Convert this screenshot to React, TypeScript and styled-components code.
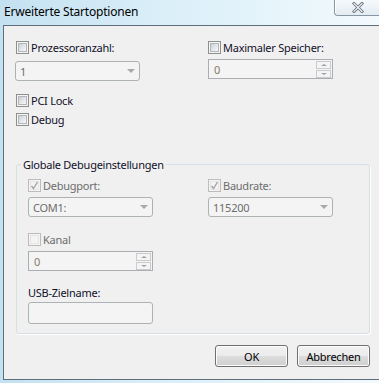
import React from "react";
import styled, { createGlobalStyle, css } from "styled-components";

const GlobalStyle = createGlobalStyle`
  html, body {
    margin: 0;
    padding: 0;
    width: 379px;
    height: 383px;
    overflow: hidden;
  }
  body {
    font-family: "Noto Sans", "Open Sans", sans-serif;
    font-size: 11px;
    letter-spacing: -0.25px;
    color: #000;
  }
`;

const Window = styled.div`
  display: flex;
  flex-direction: column;
  width: 384px;
  height: 383px;
  background: linear-gradient(90deg, #c4e1f1 0%, #d9eef8 40%, #e8f5fb 75%, #f3fafd 100%);
`;

const TitleBar = styled.div`
  display: flex;
  justify-content: space-between;
  align-items: flex-start;
  height: 25px;
  flex: none;
`;

const Title = styled.div`
  padding: 4px 0 0 4px;
  line-height: 15px;
  font-size: 12px;
  letter-spacing: -0.2px;
  color: #000;
`;

const CloseButton = styled.div`
  display: flex;
  align-items: center;
  justify-content: center;
  width: 46px;
  height: 15px;
  margin-right: 3px;
  border: 1px solid #8796a4;
  border-top: none;
  border-right: none;
  border-bottom-left-radius: 4px;
  background: linear-gradient(#f6f9fb, #e3ecf2);
  box-shadow: inset 1px 0 0 #ffffff;
`;

const Client = styled.div`
  flex: 1;
  margin: 0 0 3px 3px;
  border: 1px solid #5f6e7b;
  border-right: none;
  background: #f0f0f0;
  padding: 14px 0 0 11px;
`;

const Columns = styled.div<{ $left: number }>`
  display: grid;
  grid-template-columns: ${(p) => p.$left}px 125px;
  align-items: start;
`;

const Column = styled.div`
  display: flex;
  flex-direction: column;
  align-items: flex-start;
`;

const CheckRow = styled.label<{ $mt?: number; $ml?: number; $disabled?: boolean }>`
  display: flex;
  align-items: center;
  gap: 2px;
  height: 15px;
  line-height: 15px;
  margin-top: ${(p) => p.$mt ?? 0}px;
  margin-left: ${(p) => p.$ml ?? 0}px;
  color: ${(p) => (p.$disabled ? "#6d6d6d" : "#10102a")};
  white-space: nowrap;
`;

const Box = styled.span<{ $disabled?: boolean }>`
  position: relative;
  display: inline-block;
  box-sizing: border-box;
  width: 13px;
  height: 13px;
  border: 1px solid ${(p) => (p.$disabled ? "#bcbcbc" : "#8e8f8f")};
  background: #f4f4f4;
  padding: 1px;
  flex: none;
  &::after {
    content: "";
    display: block;
    box-sizing: border-box;
    width: 9px;
    height: 9px;
    ${(p) =>
      p.$disabled
        ? css`
            background: #f4f4f4;
            border: 1px solid #e6e6e6;
          `
        : css`
            background: linear-gradient(135deg, #cbcfd4 0%, #e6e8ea 55%, #f6f6f6 100%);
            border: 1px solid #b3b7bc;
          `}
  }
  svg {
    position: absolute;
    left: 1px;
    top: 1px;
    z-index: 1;
  }
`;

const fieldBase = css`
  box-sizing: border-box;
  width: 125px;
  background: #f4f4f4;
  border: 1px solid #adb2b5;
`;

const Combo = styled.div<{ $mt?: number }>`
  ${fieldBase};
  display: flex;
  align-items: center;
  height: 20px;
  border-radius: 3px;
  padding-left: 4px;
  margin-top: ${(p) => p.$mt ?? 0}px;
  color: #6d6d6d;
`;

const Arrow = styled.span`
  margin-left: auto;
  margin-right: 4px;
  width: 0;
  height: 0;
  border-left: 4px solid transparent;
  border-right: 4px solid transparent;
  border-top: 4px solid #a9a9a9;
`;

const Spin = styled.div<{ $mt?: number }>`
  ${fieldBase};
  display: flex;
  align-items: center;
  height: 20px;
  padding: 1px 1px 1px 5px;
  margin-top: ${(p) => p.$mt ?? 0}px;
  border-color: #abadb3;
  color: #857a6a;
`;

const SpinButtons = styled.div`
  margin-left: auto;
  display: flex;
  flex-direction: column;
  gap: 1px;
`;

const SpinButton = styled.div<{ $down?: boolean }>`
  box-sizing: border-box;
  display: flex;
  align-items: center;
  justify-content: center;
  width: 15px;
  height: 8px;
  border: 1px solid #c9ccce;
  background: #f4f4f4;
  &::after {
    content: "";
    width: 0;
    height: 0;
    border-left: 3px solid transparent;
    border-right: 3px solid transparent;
    ${(p) =>
      p.$down
        ? css`border-top: 2px solid #a0a0a0;`
        : css`border-bottom: 2px solid #a0a0a0;`}
  }
`;

const Group = styled.fieldset`
  box-sizing: border-box;
  width: 354px;
  margin: 30px 0 0 1px;
  padding: 6px 0 9px 11px;
  border: 1px solid #d5dfe5;
  border-radius: 3px;
  box-shadow: 1px 1px 0 #ffffff;
`;

const Legend = styled.legend`
  margin-left: -7px;
  padding: 0 2px;
  line-height: 15px;
  color: #10102a;
`;

const FieldLabel = styled.div<{ $mt?: number }>`
  line-height: 15px;
  margin-top: ${(p) => p.$mt ?? 0}px;
  color: #10102a;
`;

const TextBox = styled.div`
  ${fieldBase};
  height: 22px;
  border-radius: 3px;
  margin-top: 2px;
`;

const ButtonRow = styled.div`
  display: flex;
  justify-content: flex-end;
  gap: 9px;
  width: 354px;
  margin: 11px 0 0 1px;
`;

const Button = styled.button`
  box-sizing: border-box;
  width: 73px;
  height: 22px;
  padding: 0;
  border: 1px solid #707070;
  border-radius: 3px;
  background: linear-gradient(#f2f2f2 0%, #ebebeb 50%, #dddddd 50%, #cfcfcf 100%);
  box-shadow: inset 0 0 0 1px #fcfcfc;
  font-family: inherit;
  font-size: 11px;
  letter-spacing: -0.25px;
  color: #000;
`;

function Check({ label, checked, disabled, mt, ml }: { label: string; checked?: boolean; disabled?: boolean; mt?: number; ml?: number }) {
  return (
    <CheckRow $mt={mt} $ml={ml} $disabled={disabled}>
      <Box $disabled={disabled}>
        {checked && (
          <svg width="9" height="9" viewBox="0 0 9 9">
            <path d="M1.5 5 L3.5 7.5 L7.5 1" fill="none" stroke="#a4a4a4" strokeWidth="1.4" />
          </svg>
        )}
      </Box>
      {label}
    </CheckRow>
  );
}

export default function App() {
  return (
    <>
      <GlobalStyle />
      <Window>
        <TitleBar>
          <Title>Erweiterte Startoptionen</Title>
          <CloseButton>
            <svg width="12" height="11" viewBox="0 0 12 11">
              <path d="M2 1.5 L10 9.5 M10 1.5 L2 9.5" stroke="#6b7580" strokeWidth="3" strokeLinecap="square" />
              <path d="M2 1.5 L10 9.5 M10 1.5 L2 9.5" stroke="#eef2f5" strokeWidth="1.2" strokeLinecap="square" />
            </svg>
          </CloseButton>
        </TitleBar>
        <Client>
          <Columns $left={193}>
            <Column>
              <Check label="Prozessoranzahl:" ml={1} />
              <Combo $mt={6}>
                1<Arrow />
              </Combo>
              <Check label="PCI Lock" ml={1} mt={12} />
              <Check label="Debug" ml={1} mt={4} />
            </Column>
            <Column>
              <Check label="Maximaler Speicher:" />
              <Spin $mt={4}>
                0
                <SpinButtons>
                  <SpinButton />
                  <SpinButton $down />
                </SpinButtons>
              </Spin>
            </Column>
          </Columns>
          <Group>
            <Legend>Globale Debugeinstellungen</Legend>
            <Columns $left={180}>
              <Column>
                <Check label="Debugport:" checked disabled />
                <Combo $mt={4}>
                  COM1:<Arrow />
                </Combo>
                <Check label="Kanal" disabled mt={15} />
                <Spin $mt={4}>
                  0
                  <SpinButtons>
                    <SpinButton />
                    <SpinButton $down />
                  </SpinButtons>
                </Spin>
                <FieldLabel $mt={14}>USB-Zielname:</FieldLabel>
                <TextBox />
              </Column>
              <Column>
                <Check label="Baudrate:" checked disabled />
                <Combo $mt={4}>
                  115200<Arrow />
                </Combo>
              </Column>
            </Columns>
          </Group>
          <ButtonRow>
            <Button>OK</Button>
            <Button>Abbrechen</Button>
          </ButtonRow>
        </Client>
      </Window>
    </>
  );
}
